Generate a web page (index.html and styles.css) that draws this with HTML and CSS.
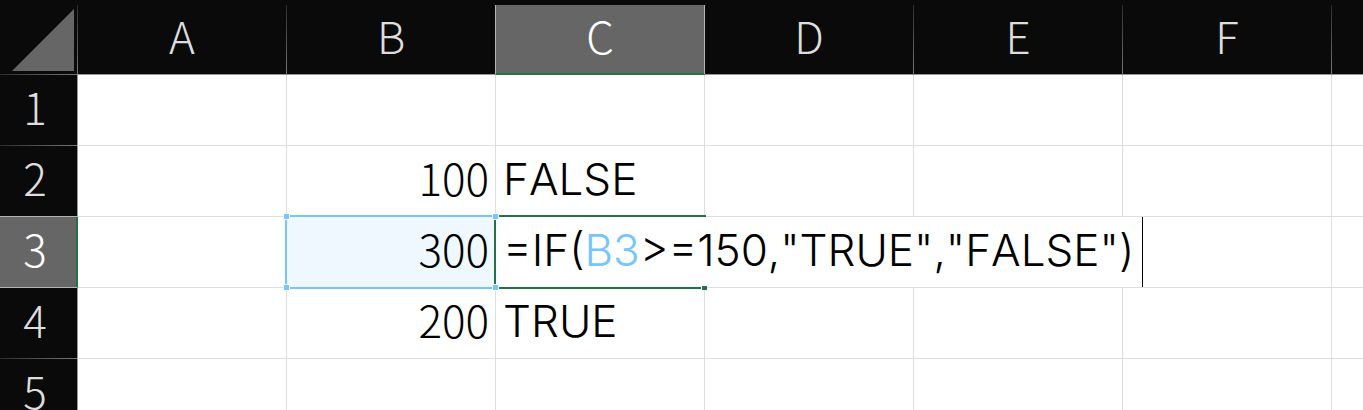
FILE: index.html
```html
<!DOCTYPE html>
<html lang="ja">
<head>
<meta charset="utf-8">
<title>Sheet</title>
<link rel="stylesheet" href="styles.css">
</head>
<body>
<table class="sheet">
  <colgroup><col class="col-index"><col class="col"><col class="col"><col class="col"><col class="col"><col class="col"><col class="col"><col></colgroup>
  <thead>
    <tr>
      <th class="corner"><svg class="corner-mark" viewBox="0 0 62 62" aria-hidden="true"><path d="M62 0V62H0Z"/></svg></th>
      <th scope="col">A</th><th scope="col" class="before-active">B</th><th scope="col" class="active-col">C</th><th scope="col">D</th><th scope="col">E</th><th scope="col">F</th><th class="rest"></th>
    </tr>
  </thead>
  <tbody>
    <tr><th scope="row">1</th><td></td><td></td><td></td><td></td><td></td><td></td><td class="rest"></td></tr>
    <tr class="above-active"><th scope="row">2</th><td></td><td class="number">100</td><td class="text">FALSE</td><td></td><td></td><td></td><td class="rest"></td></tr>
    <tr>
      <th scope="row" class="active-row">3</th><td></td>
      <td class="number referenced">300<span class="range"><i class="handle top-left"></i><i class="handle bottom-left"></i></span></td>
      <td class="text editing" colspan="4"><span class="outline"><i class="handle top-left"></i><i class="handle bottom-left"></i><i class="fill-handle"></i></span><span class="formula">=IF(<span class="reference">B3</span>&gt;=150,"TRUE","FALSE")</span></td>
      <td class="rest"></td>
    </tr>
    <tr><th scope="row">4</th><td></td><td class="number">200</td><td class="text">TRUE</td><td></td><td></td><td></td><td class="rest"></td></tr>
    <tr><th scope="row">5</th><td></td><td></td><td></td><td></td><td></td><td></td><td class="rest"></td></tr>
  </tbody>
</table>
</body>
</html>
```
FILE: styles.css
```css
* { box-sizing: border-box; }

body {
  margin: 0;
  padding-top: 5px;
  overflow: hidden;
  background: #0a0a0a;
  color: #000;
  font-family: "Noto Sans CJK JP", sans-serif;
  font-size: 44px;
  font-weight: 300;
  font-kerning: none;
  line-height: 60px;
}

.sheet {
  width: 100%;
  table-layout: fixed;
  border-collapse: separate;
  border-spacing: 0;
}

.col-index { width: 78px; }
.col { width: 209px; }

th, td {
  position: relative;
  height: 71px;
  border: solid #dedede;
  border-width: 0 1px 1px 0;
}

td {
  padding: 0 7px 9px;
  background: #fff;
  text-align: left;
  white-space: nowrap;
}

th {
  padding: 0 0 9px;
  background: #0a0a0a;
  color: #dedede;
  font-weight: 300;
  text-align: center;
}

thead th {
  height: 70px;
  border-right-color: #77777a;
  border-bottom-color: #969696;
}

thead th::after {
  content: "";
  position: absolute;
  top: 0;
  right: -1px;
  width: 1px;
  height: 69px;
  background: linear-gradient(#2c2c2c, #77777a);
}

tbody th {
  padding-right: 7px;
  border-right-color: #969696;
}

tbody th::after,
.corner::before {
  content: "";
  position: absolute;
  left: 0;
  right: 0;
  bottom: -1px;
  height: 1px;
  background: linear-gradient(90deg, #2c2c2c, #77777a);
}

.sheet .rest { padding: 0; border-right: 0; }
.sheet .rest::after { content: none; }

.sheet .corner { padding: 0; }

.corner-mark {
  display: block;
  width: 62px;
  height: 62px;
  margin: 4px 3px 3px auto;
  fill: #666;
}

thead .active-col, tbody .active-row {
  background: #666;
  color: #fff;
}

thead .active-col { border-bottom: 2px solid #217346; padding-bottom: 8px; }
thead .before-active::after,
thead .active-col::after,
.above-active th::after,
tbody .active-row::after { background: #b4b4b4; }
tbody .active-row { border-right: 2px solid #217346; padding-right: 6px; }

.number { padding-right: 6px; text-align: right; }

.text {
  padding-bottom: 4px;
  font-family: Inter, "Noto Sans CJK JP", sans-serif;
  line-height: 66px;
}

.referenced { background: #f0f8ff; }

.range, .outline {
  position: absolute;
  top: -2px;
  bottom: -2px;
  border: solid;
  border-width: 2px 0;
}

.range {
  z-index: 1;
  left: -2px;
  right: -1px;
  border-left-width: 2px;
  border-color: #75c5ff;
}

.outline {
  z-index: 2;
  left: -2px;
  width: 212px;
  border-left-width: 2px;
  border-color: #217346;
}

.handle {
  position: absolute;
  width: 7px;
  height: 7px;
  border: 1px solid #fff;
  background: #75c5ff;
}

.top-left { top: -4px; left: -4px; }
.bottom-left { bottom: -4px; left: -4px; }

.fill-handle {
  position: absolute;
  right: -1px;
  bottom: -3px;
  width: 6px;
  height: 4px;
  border-left: 1px solid #fff;
  background: #217346;
}

.formula {
  display: block;
  width: max-content;
  height: 70px;
  padding-right: 8px;
  border-right: 1px solid #000;
}

.sheet .editing { padding-bottom: 0; }
.reference { color: #75c5ff; }
```
